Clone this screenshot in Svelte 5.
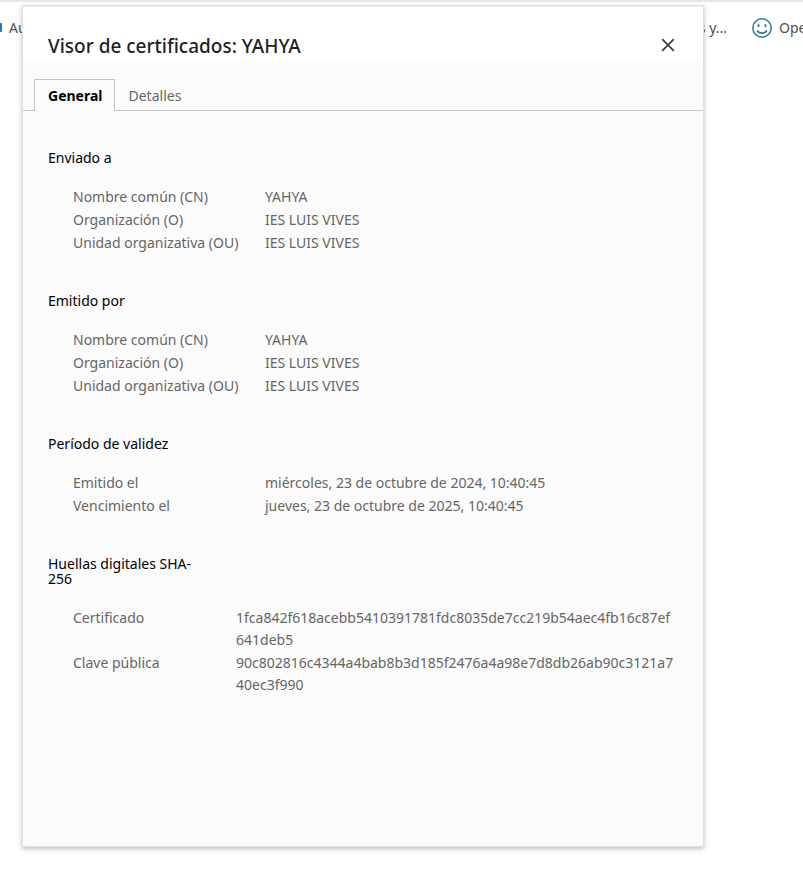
<script>
  let active = $state('general');

  const sections = [
    {
      title: 'Enviado a',
      rows: [
        ['Nombre común (CN)', 'YAHYA'],
        ['Organización (O)', 'IES LUIS VIVES'],
        ['Unidad organizativa (OU)', 'IES LUIS VIVES']
      ]
    },
    {
      title: 'Emitido por',
      rows: [
        ['Nombre común (CN)', 'YAHYA'],
        ['Organización (O)', 'IES LUIS VIVES'],
        ['Unidad organizativa (OU)', 'IES LUIS VIVES']
      ]
    },
    {
      title: 'Período de validez',
      rows: [
        ['Emitido el', 'miércoles, 23 de octubre de 2024, 10:40:45'],
        ['Vencimiento el', 'jueves, 23 de octubre de 2025, 10:40:45']
      ]
    },
    {
      title: 'Huellas digitales SHA-256',
      hash: true,
      rows: [
        ['Certificado', '1fca842f618acebb5410391781fdc8035de7cc219b54aec4fb16c87ef641deb5'],
        ['Clave pública', '90c802816c4344a4bab8b3d185f2476a4a98e7d8db26ab90c3121a740ec3f990']
      ]
    }
  ];
</script>

<div class="page">
  <nav class="bookmarks" aria-label="Marcadores">
    <a class="first" href="#au"><span class="mark"></span>Au</a>
    <a class="middle" href="#y">s y...</a>
    <a class="last" href="#ope">
      <svg width="20" height="20" viewBox="0 0 20 20" fill="none" stroke="#30789b" stroke-width="1.5" aria-hidden="true">
        <circle cx="10" cy="10" r="9.2" />
        <path d="M5.2 12.4C6.2 14.2 8 15.2 10 15.2s3.800-1 4.800-2.800" stroke-width="1.700" />
        <path d="M6.500 6.200v2.800M13.500 6.200v2.800" stroke-width="1.800" />
      </svg>Ope
    </a>
  </nav>

  <div class="dialog" role="dialog" aria-labelledby="dialog-title">
    <header>
      <h1 id="dialog-title">Visor de certificados: YAHYA</h1>
      <button class="close" aria-label="Cerrar">
        <svg width="14" height="14" viewBox="0 0 14 14" stroke="#404040" stroke-width="1.800" aria-hidden="true">
          <path d="M1.200 1.200l11.600 11.600M12.800 1.200L1.200 12.800" />
        </svg>
      </button>
    </header>

    <div class="tabs" role="tablist">
      <button role="tab" aria-selected={active === 'general'} class:active={active === 'general'} onclick={() => (active = 'general')}>General</button>
      <button role="tab" aria-selected={active === 'detalles'} class:active={active === 'detalles'} onclick={() => (active = 'detalles')}>Detalles</button>
    </div>

    {#if active === 'general'}
      <div class="content" role="tabpanel">
        {#each sections as section}
          <section>
            <h2>{section.title}</h2>
            <dl class:hash={section.hash}>
              {#each section.rows as [label, value]}
                <div class="row">
                  <dt>{label}</dt>
                  <dd>{value}</dd>
                </div>
              {/each}
            </dl>
          </section>
        {/each}
      </div>
    {/if}
  </div>
</div>

<style>
  .page {
    position: relative;
    min-height: 100vh;
    overflow: hidden;
    box-sizing: border-box;
    border-top: 2px solid #e4e7eb;
    background: #fff;
    font-family: 'Noto Sans', 'Open Sans', sans-serif;
    font-size: 14px;
    color: #666;
  }

  .bookmarks {
    display: flex;
    align-items: center;
    height: 51px;
    white-space: nowrap;
  }

  .bookmarks a {
    display: flex;
    align-items: center;
    color: #505050;
    text-decoration: none;
  }

  .first {
    gap: 7px;
  }

  .mark {
    width: 2px;
    height: 9px;
    border-radius: 0 1px 1px 0;
    background: #1976d2;
  }

  .middle {
    margin-left: auto;
  }

  .last {
    gap: 7px;
    width: 51px;
    margin-left: 25px;
  }

  .last svg {
    flex: none;
  }

  .dialog {
    position: absolute;
    top: 3px;
    left: 22px;
    right: 99px;
    min-height: 842px;
    box-sizing: border-box;
    border: 1px solid #e0e0e0;
    border-top: 2px solid #e8e8e8;
    background: #fbfbfb;
    box-shadow: 0 2px 5px rgba(0, 0, 0, 0.25);
  }

  header {
    display: flex;
    align-items: center;
    justify-content: space-between;
    height: 54px;
    padding: 24px 28px 0 25px;
    box-sizing: border-box;
    background: #fff;
  }

  h1 {
    margin: 0;
    font-size: 19px;
    line-height: 24px;
    font-weight: 500;
    color: #1f1f1f;
  }

  button {
    border: 0;
    background: none;
    font: inherit;
    color: inherit;
    cursor: pointer;
  }

  .close {
    display: flex;
    padding: 0 0 2px;
  }

  .close svg {
    display: block;
  }

  .tabs {
    display: flex;
    padding: 18px 11px 0;
    border-bottom: 1px solid #c4c4c4;
  }

  .tabs button {
    height: 31px;
    margin-bottom: -1px;
    padding: 0 11px 0 13px;
    box-sizing: content-box;
    border: 1px solid transparent;
    border-bottom: 0;
  }

  .tabs button.active {
    border-color: #c4c4c4;
    background: #fbfbfb;
    font-weight: 700;
    color: #000;
  }

  .content {
    padding: 39px 25px 0;
  }

  section {
    margin-bottom: 39px;
  }

  h2 {
    max-width: 158px;
    margin: 0 0 21px;
    font-size: 14px;
    line-height: 15px;
    font-weight: 400;
    color: #000;
  }

  dl {
    display: flex;
    flex-direction: column;
    gap: 1px;
    margin: 0 0 0 25px;
    line-height: 22px;
  }

  .row {
    display: flex;
  }

  dt {
    flex: none;
    width: 192px;
  }

  .hash dt {
    width: 163px;
  }

  dd {
    flex: 1;
    min-width: 0;
    margin: 0;
    overflow-wrap: anywhere;
  }
</style>
